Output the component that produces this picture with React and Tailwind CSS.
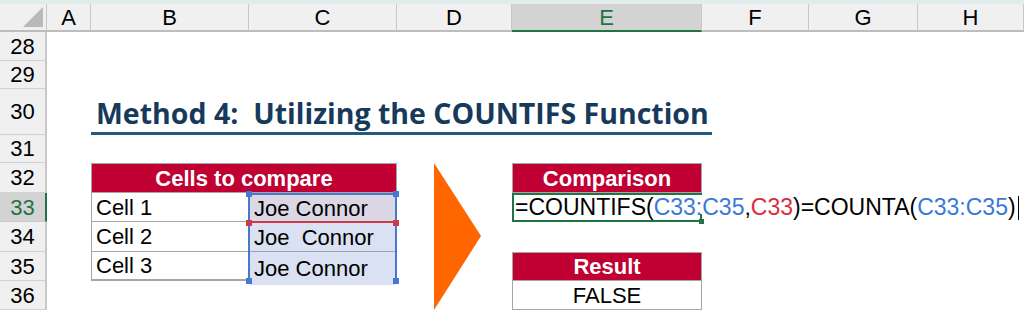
const cols = ["A", "B", "C", "D", "E", "F", "G", "H"];
const rows = [28, 29, 30, 31, 32, 33, 34, 35, 36];

function Handle({ className }) {
  return <span className={`absolute w-[6px] h-[6px] ${className}`}></span>;
}

function App() {
  return (
    <div className="w-[1024px] h-[310px] overflow-hidden bg-white font-['Liberation_Sans',Arial,sans-serif] text-black">
      <div className="h-[4px] bg-[#e1ecec]"></div>
      <div className="grid grid-cols-[47px_44px_158px_148px_115px_190px_107px_109px_1fr] grid-rows-[28px_29px_28px_46px_28px_30px_29px_30px_29px_29px]">
        {/* corner */}
        <div className="col-start-1 row-start-1 relative bg-[#f0f0f0] border-r border-b-2 border-[#c8c8c8] border-b-[#bdbdbd]">
          <svg className="absolute right-[3px] bottom-[3px]" width="20" height="20" viewBox="0 0 20 20">
            <polygon points="20,0 20,20 0,20" fill="#b9b9b9" />
          </svg>
        </div>

        {/* column headers */}
        {cols.map((c) =>
          c === "E" ? (
            <div key={c} className="row-start-1 flex items-center justify-center bg-[#d3d3d3] text-[#217346] text-[22px] border-r border-[#c8c8c8] border-b-2 border-b-[#217346]">
              {c}
            </div>
          ) : (
            <div key={c} className="row-start-1 flex items-center justify-center bg-[#f0f0f0] text-[22px] border-r border-[#c8c8c8] border-b-2 border-b-[#bdbdbd]">
              {c}
            </div>
          )
        )}

        {/* row headers */}
        {rows.map((r) =>
          r === 33 ? (
            <div key={r} className="col-start-1 flex items-center justify-center bg-[#d3d3d3] text-[#217346] text-[22px] border-b border-[#c8c8c8] border-r-2 border-r-[#217346]">
              {r}
            </div>
          ) : (
            <div key={r} className="col-start-1 flex items-center justify-center bg-[#f0f0f0] text-[22px] border-b border-[#d0d0d0] border-r-2 border-r-[#c8c8c8]">
              {r}
            </div>
          )
        )}

        {/* title */}
        <div className="col-start-3 col-span-6 row-start-4 flex items-end">
          <div className="w-[621px] border-b-[3px] border-[#235b7a] pl-[5px] pb-[1px] font-['Open_Sans',sans-serif] font-bold text-[28.5px] leading-[36px] text-[#183a5a] whitespace-nowrap">
            Method 4:&nbsp; Utilizing the COUNTIFS Function
          </div>
        </div>

        {/* cells to compare */}
        <div className="col-start-3 col-span-2 row-start-6 flex items-center justify-center bg-[#c00033] text-white font-bold text-[22px] border border-[#a6a6a6]">
          Cells to compare
        </div>
        <div className="col-start-3 row-start-7 row-span-3 flex flex-col border-l border-[#a6a6a6]">
          <div className="h-[29px] flex items-center pl-[4px] text-[22px] border-b border-[#a6a6a6]">Cell 1</div>
          <div className="h-[30px] flex items-center pl-[4px] text-[22px] border-b border-[#a6a6a6]">Cell 2</div>
          <div className="h-[29px] flex items-center pl-[4px] text-[22px] border-b-2 border-[#a6a6a6]">Cell 3</div>
        </div>
        <div className="col-start-4 row-start-7 row-span-3 relative -ml-[1px] -mb-[1px] flex flex-col border-2 border-[#4678d2]">
          <div className="h-[28px] flex items-center pl-[4px] text-[22px] bg-[#dbd7e5] border-b-2 border-[#cf3a4b]">Joe Connor</div>
          <div className="h-[29px] flex items-center pl-[4px] text-[22px] bg-[#d9e1f2] border-b border-[#9aa3b4] whitespace-pre">Joe  Connor</div>
          <div className="flex-1 flex items-center pl-[4px] text-[22px] bg-[#d9e1f2]">Joe Connor</div>
          <Handle className="-left-[4px] -top-[4px] bg-[#4678d2]" />
          <Handle className="-right-[4px] -top-[4px] bg-[#4678d2]" />
          <Handle className="-left-[4px] top-[25px] bg-[#cf3a4b]" />
          <Handle className="-right-[4px] top-[25px] bg-[#cf3a4b]" />
          <Handle className="-left-[4px] -bottom-[4px] bg-[#4678d2]" />
          <Handle className="-right-[4px] -bottom-[4px] bg-[#4678d2]" />
        </div>

        {/* arrow */}
        <div className="col-start-5 row-start-6 row-span-5 pl-[37px]">
          <svg width="47" height="150" viewBox="0 0 47 150">
            <polygon points="0,0 47,73 0,147" fill="#ff6600" />
          </svg>
        </div>

        {/* comparison */}
        <div className="col-start-6 row-start-6 flex items-center justify-center bg-[#c00033] text-white font-bold text-[22px] border border-[#a6a6a6]">
          Comparison
        </div>
        <div className="col-start-6 row-start-7 relative z-10 border-2 border-[#217346]">
          <div className="absolute left-0 top-0 h-[19px] w-[505px] bg-white"></div>
          <div className="absolute left-[1px] top-[-2px] h-[29px] whitespace-nowrap text-[23px] flex items-center">
            <span>=COUNTIFS(</span>
            <span className="text-[#3b78d8]">C33:C35</span>
            <span>,</span>
            <span className="text-[#d6303f]">C33</span>
            <span>)=COUNTA(</span>
            <span className="text-[#3b78d8]">C33:C35</span>
            <span>)</span>
            <span className="ml-[2px] w-[1px] h-[24px] bg-black"></span>
          </div>
          <span className="absolute -right-[4px] -bottom-[4px] w-[5px] h-[5px] bg-[#217346]"></span>
        </div>

        {/* result */}
        <div className="col-start-6 row-start-9 flex items-center justify-center bg-[#c00033] text-white font-bold text-[22px] border border-[#a6a6a6]">
          Result
        </div>
        <div className="col-start-6 row-start-10 flex items-center justify-center text-[22px] border border-t-0 border-[#a6a6a6]">
          FALSE
        </div>
      </div>
    </div>
  );
}

export default App;
